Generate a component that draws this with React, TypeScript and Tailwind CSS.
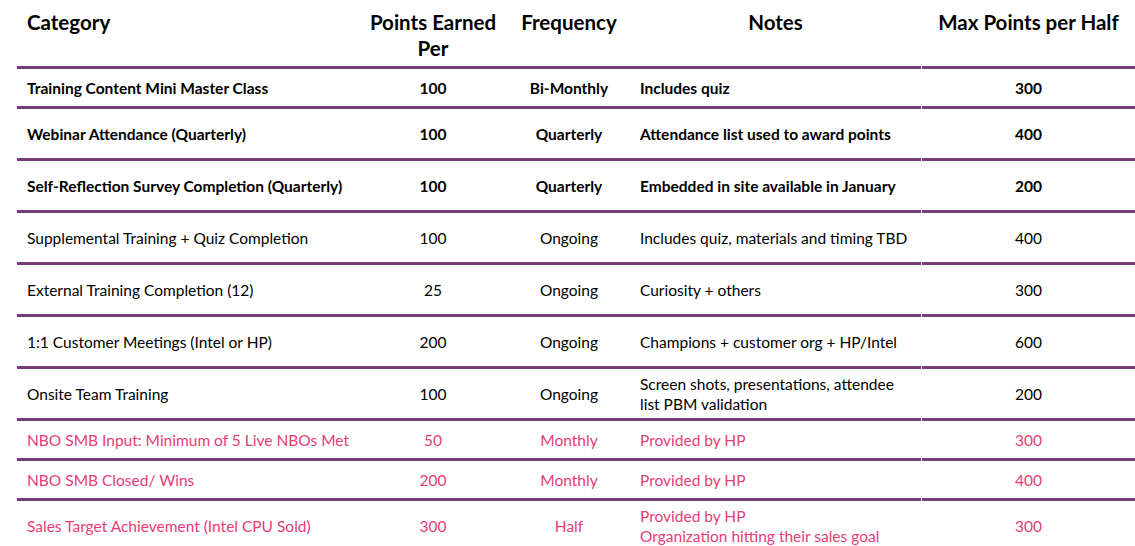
import React from 'react';

type Row = {
  category: string;
  points: string;
  frequency: string;
  notes: string[];
  max: string;
  kind: 'bold' | 'plain' | 'pink';
  height: string;
};

const rows: Row[] = [
  { category: 'Training Content Mini Master Class', points: '100', frequency: 'Bi-Monthly', notes: ['Includes quiz'], max: '300', kind: 'bold', height: 'h-[40px]' },
  { category: 'Webinar Attendance (Quarterly)', points: '100', frequency: 'Quarterly', notes: ['Attendance list used to award points'], max: '400', kind: 'bold', height: 'h-[52px]' },
  { category: 'Self-Reflection Survey Completion (Quarterly)', points: '100', frequency: 'Quarterly', notes: ['Embedded in site available in January'], max: '200', kind: 'bold', height: 'h-[52px]' },
  { category: 'Supplemental Training + Quiz Completion', points: '100', frequency: 'Ongoing', notes: ['Includes quiz, materials and timing TBD'], max: '400', kind: 'plain', height: 'h-[52px]' },
  { category: 'External Training Completion (12)', points: '25', frequency: 'Ongoing', notes: ['Curiosity + others'], max: '300', kind: 'plain', height: 'h-[52px]' },
  { category: '1:1 Customer Meetings (Intel or HP)', points: '200', frequency: 'Ongoing', notes: ['Champions + customer org + HP/Intel'], max: '600', kind: 'plain', height: 'h-[52px]' },
  { category: 'Onsite Team Training', points: '100', frequency: 'Ongoing', notes: ['Screen shots, presentations, attendee', 'list PBM validation'], max: '200', kind: 'plain', height: 'h-[52px]' },
  { category: 'NBO SMB Input: Minimum of 5 Live NBOs Met', points: '50', frequency: 'Monthly', notes: ['Provided by HP'], max: '300', kind: 'pink', height: 'h-[40px]' },
  { category: 'NBO SMB Closed/ Wins', points: '200', frequency: 'Monthly', notes: ['Provided by HP'], max: '400', kind: 'pink', height: 'h-[40px]' },
  { category: 'Sales Target Achievement (Intel CPU Sold)', points: '300', frequency: 'Half', notes: ['Provided by HP', 'Organization hitting their sales goal'], max: '300', kind: 'pink', height: 'h-[45px] pt-[4px]' },
];

const textStyle = {
  bold: 'font-bold text-black',
  plain: 'font-normal text-black',
  pink: 'font-normal text-[#e83c78]',
};

export default function App() {
  return (
    <div className="w-[1135px] h-[546px] bg-white overflow-hidden pl-[17px] font-['Lato','Liberation_Sans',sans-serif]">
      {/* Header */}
      <div className="grid grid-cols-[341px_150px_122px_292px_213px] h-[69px] text-[20.5px] font-bold leading-[26px] text-black">
        <div className="pl-[10px] pt-[9px] border-b-[3px] border-[#773b77]">Category</div>
        <div className="pt-[9px] text-center border-b-[3px] border-[#773b77]">
          Points Earned
          <br />
          Per
        </div>
        <div className="pt-[9px] text-center border-b-[3px] border-[#773b77]">Frequency</div>
        <div className="pt-[9px] text-center border-b-[3px] border-[#773b77] mr-px">Notes</div>
        <div className="pt-[9px] text-center border-b-[3px] border-[#773b77]">Max Points per Half</div>
      </div>

      {/* Body */}
      {rows.map((row, i) => {
        const last = i === rows.length - 1;
        const line = last ? '' : 'border-b-[3px] border-[#773b77]';
        return (
          <div
            key={row.category}
            className={`grid grid-cols-[341px_150px_122px_292px_213px] ${row.height} text-[15.5px] leading-[20px] ${textStyle[row.kind]}`}
          >
            <div className={`flex items-center pl-[10px] ${line}`}>{row.category}</div>
            <div className={`flex items-center justify-center ${line}`}>{row.points}</div>
            <div className={`flex items-center justify-center ${line}`}>{row.frequency}</div>
            <div className={`flex flex-col justify-center pl-[10px] mr-px ${line}`}>
              {row.notes.map((n) => (
                <span key={n}>{n}</span>
              ))}
            </div>
            <div className={`flex items-center justify-center ${line}`}>{row.max}</div>
          </div>
        );
      })}
    </div>
  );
}
